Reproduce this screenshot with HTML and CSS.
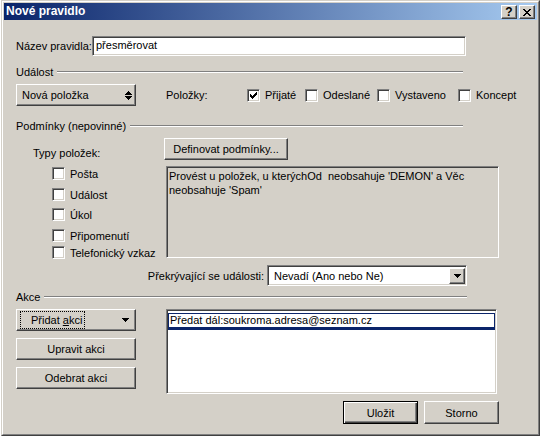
FILE: index.html
```html
<!DOCTYPE html>
<html lang="cs">
<head>
<meta charset="utf-8">
<title>Nové pravidlo</title>
<link rel="stylesheet" href="styles.css">
</head>
<body>
<div class="dialog">
  <div class="frame">
    <div class="titlebar">
      <span class="title">Nové pravidlo</span>
      <div class="tb-buttons">
        <span class="tb-btn help">?</span>
        <span class="tb-btn">
          <svg class="px" width="8" height="7" viewBox="0 0 8 7"><path d="M0 0h2v1h-2zM6 0h2v1h-2zM1 1h2v1h-2zM5 1h2v1h-2zM2 2h4v1h-4zM3 3h2v1h-2zM2 4h4v1h-4zM1 5h2v1h-2zM5 5h2v1h-2zM0 6h2v1h-2zM6 6h2v1h-2z"/></svg>
        </span>
      </div>
    </div>

    <div class="content">
      <div class="name-row">
        <span class="name-label">Název pravidla:</span>
        <div class="textfield sunken">přesměrovat</div>
      </div>

      <div class="group group-event"><span>Událost</span><span class="group-line"></span></div>

      <div class="event-row">
        <div class="spin-combo raised">
          <span>Nová položka</span>
          <svg class="px" width="7" height="9" viewBox="0 0 7 9"><path d="M3 0h1v1h1v1h1v1h1v1H0V3h1V2h1V1h1z"/><path d="M0 5h7v1h-1v1h-1v1h-1v1h-1V8H2V7H1V6H0z"/></svg>
        </div>
        <span class="items-label">Položky:</span>
        <label class="check check-w1"><span class="box"><svg class="px" width="11" height="11" viewBox="0 0 11 11"><path d="M2 4V7H3V8H4V9H5V8H6V7H7V6H8V5H9V2H8V3H7V4H6V5H5V6H4V5H3V4Z"/></svg></span>Přijaté</label>
        <label class="check check-w2"><span class="box"></span>Odeslané</label>
        <label class="check check-w3"><span class="box"></span>Vystaveno</label>
        <label class="check"><span class="box"></span>Koncept</label>
      </div>

      <div class="group group-cond"><span>Podmínky (nepovinné)</span><span class="group-line"></span></div>

      <div class="cond-row">
        <div class="types">
          <div class="types-label">Typy položek:</div>
          <div class="type-list">
            <label class="check"><span class="box"></span>Pošta</label>
            <label class="check"><span class="box"></span>Událost</label>
            <label class="check"><span class="box"></span>Úkol</label>
            <label class="check"><span class="box"></span>Připomenutí</label>
            <label class="check"><span class="box"></span>Telefonický vzkaz</label>
          </div>
        </div>
        <div class="cond-right">
          <div class="button raised define-btn">Definovat podmínky...</div>
          <div class="cond-box sunken">Provést u položek, u kterýchOd&nbsp; neobsahuje 'DEMON' a Věc neobsahuje 'Spam'</div>
        </div>
      </div>

      <div class="overlap-row">
        <span>Překrývající se události:</span>
        <div class="combo sunken">
          <span class="combo-text">Nevadí (Ano nebo Ne)</span>
          <span class="combo-btn raised"><svg class="px" width="7" height="4" viewBox="0 0 7 4"><path d="M0 0h7v1h-1v1h-1v1h-1v1h-1V3H2V2H1V1H0z"/></svg></span>
        </div>
      </div>

      <div class="group group-action"><span>Akce</span><span class="group-line"></span></div>

      <div class="action-row">
        <div class="action-buttons">
          <div class="button raised add-btn">
            <span class="focus">Přidat <u>a</u>kci</span>
            <svg class="px" width="7" height="4" viewBox="0 0 7 4"><path d="M0 0h7v1h-1v1h-1v1h-1v1h-1V3H2V2H1V1H0z"/></svg>
          </div>
          <div class="button raised">Upravit akci</div>
          <div class="button raised">Odebrat akci</div>
        </div>
        <div class="action-list sunken">
          <div class="action-item">Předat dál:soukroma.adresa@seznam.cz</div>
        </div>
      </div>

      <div class="footer">
        <div class="button default">Uložit</div>
        <div class="button raised">Storno</div>
      </div>
    </div>
  </div>
</div>
</body>
</html>
```

FILE: styles.css
```css
* { box-sizing: border-box; }
html, body { margin: 0; padding: 0; }
body {
  width: 541px;
  height: 437px;
  overflow: hidden;
  background: #ffffff;
  font-family: "Liberation Sans", Arial, sans-serif;
  font-size: 11px;
  color: #000;
}
.px { display: block; shape-rendering: crispEdges; fill: #000; }

.dialog {
  margin-left: 1px;
  width: 539px;
  height: 436px;
  border: 1px solid;
  border-color: #d4d0c8 #404040 #404040 #d4d0c8;
}
.frame {
  height: 100%;
  border: 1px solid;
  border-color: #ffffff #808080 #808080 #ffffff;
  padding: 1px;
  background: #d4d0c8;
}
.titlebar {
  height: 17px;
  background: linear-gradient(to right, #0a246a, #a6caf0);
  display: flex;
  justify-content: space-between;
  align-items: flex-start;
}
.title {
  color: #fff;
  font-weight: bold;
  font-size: 12px;
  padding-left: 2px;
  line-height: 17px;
}
.tb-buttons { display: flex; gap: 2px; padding: 2px 2px 0 0; }
.tb-btn {
  width: 16px;
  height: 14px;
  background: #d4d0c8;
  border: 1px solid;
  border-color: #fff #404040 #404040 #fff;
  box-shadow: inset -1px -1px #808080;
  display: flex;
  align-items: center;
  justify-content: center;
}
.help { font-weight: bold; font-size: 12px; line-height: 12px; }

.sunken {
  border: 1px solid;
  border-color: #808080 #fff #fff #808080;
  box-shadow: inset 1px 1px #404040, inset -1px -1px #d4d0c8;
}
.raised {
  background: #d4d0c8;
  border: 1px solid;
  border-color: #fff #404040 #404040 #fff;
  box-shadow: inset -1px -1px #808080;
}

.content { padding-left: 12px; }

.name-row { margin-top: 16px; height: 20px; display: flex; align-items: center; }
.name-label { width: 76px; }
.textfield {
  width: 374px;
  height: 20px;
  background: #fff;
  padding-left: 3px;
  line-height: 17px;
}

.group { display: flex; align-items: center; height: 14px; }
.group-line {
  flex: 1;
  margin-left: 4px;
  border-top: 1px solid #808080;
  border-bottom: 1px solid #fff;
}
.group-event { margin-top: 9px; width: 447px; }
.group-cond { margin-top: 13px; width: 447px; }
.group-action { margin-top: 4px; width: 451px; }

.event-row { margin-top: 5px; height: 22px; display: flex; align-items: center; }
.spin-combo {
  width: 120px;
  height: 22px;
  display: flex;
  align-items: center;
  justify-content: space-between;
  padding: 0 3px 0 5px;
}
.items-label { margin-left: 30px; width: 81px; }

.check { display: flex; align-items: center; gap: 5px; height: 13px; }
.box {
  width: 13px;
  height: 13px;
  flex: none;
  background: #fff;
  border: 1px solid;
  border-color: #808080 #fff #fff #808080;
  box-shadow: inset 1px 1px #404040, inset -1px -1px #d4d0c8;
}
.check-w1 { width: 58px; }
.check-w2 { width: 72px; }
.check-w3 { width: 81px; }

.cond-row { margin-top: 5px; display: flex; height: 120px; }
.types { width: 148px; padding-left: 17px; }
.types-label { margin-top: 8px; line-height: 14px; }
.type-list {
  margin-top: 7px;
  padding-left: 19px;
  display: grid;
  grid-template-rows: 21px 20px 21px 17px 13px;
}
.cond-right { display: flex; flex-direction: column; }
.button {
  height: 22px;
  display: flex;
  align-items: center;
  justify-content: center;
}
.define-btn { width: 124px; }
.cond-box {
  margin-top: 6px;
  margin-left: 2px;
  width: 333px;
  height: 92px;
  padding: 2px 20px 0 2px;
  line-height: 14px;
}

.overlap-row {
  margin-top: 7px;
  width: 451px;
  height: 21px;
  display: flex;
  justify-content: flex-end;
  align-items: center;
}
.combo {
  margin-left: 3px;
  width: 200px;
  height: 21px;
  background: #fff;
  display: flex;
  align-items: stretch;
  padding: 2px 1px 1px 2px;
}
.combo-text { flex: 1; padding-left: 4px; line-height: 17px; }
.combo-btn {
  width: 16px;
  display: flex;
  align-items: center;
  justify-content: center;
}

.action-row { margin-top: 5px; display: flex; height: 85px; }
.action-buttons { width: 120px; display: flex; flex-direction: column; gap: 7px; }
.add-btn { justify-content: space-between; padding: 1px 6px 2px 3px; }
.focus {
  width: 65px;
  height: 18px;
  border: 1px dotted #000;
  padding-left: 10px;
  line-height: 16px;
}
.action-list {
  margin-left: 30px;
  width: 331px;
  height: 85px;
  background: #fff;
  padding: 3px 1px 0 1px;
}
.action-item {
  height: 17px;
  border: 1px solid #0a246a;
  border-bottom-width: 3px;
  padding-left: 1px;
  line-height: 13px;
}

.footer { margin-top: 7px; margin-left: 327px; display: flex; gap: 6px; }
.footer .button { width: 75px; height: 23px; }
.default {
  background: #d4d0c8;
  border: 1px solid #000;
  box-shadow: inset 1px 1px #fff, inset -1px -1px #404040, inset -2px -2px #808080;
}
```
